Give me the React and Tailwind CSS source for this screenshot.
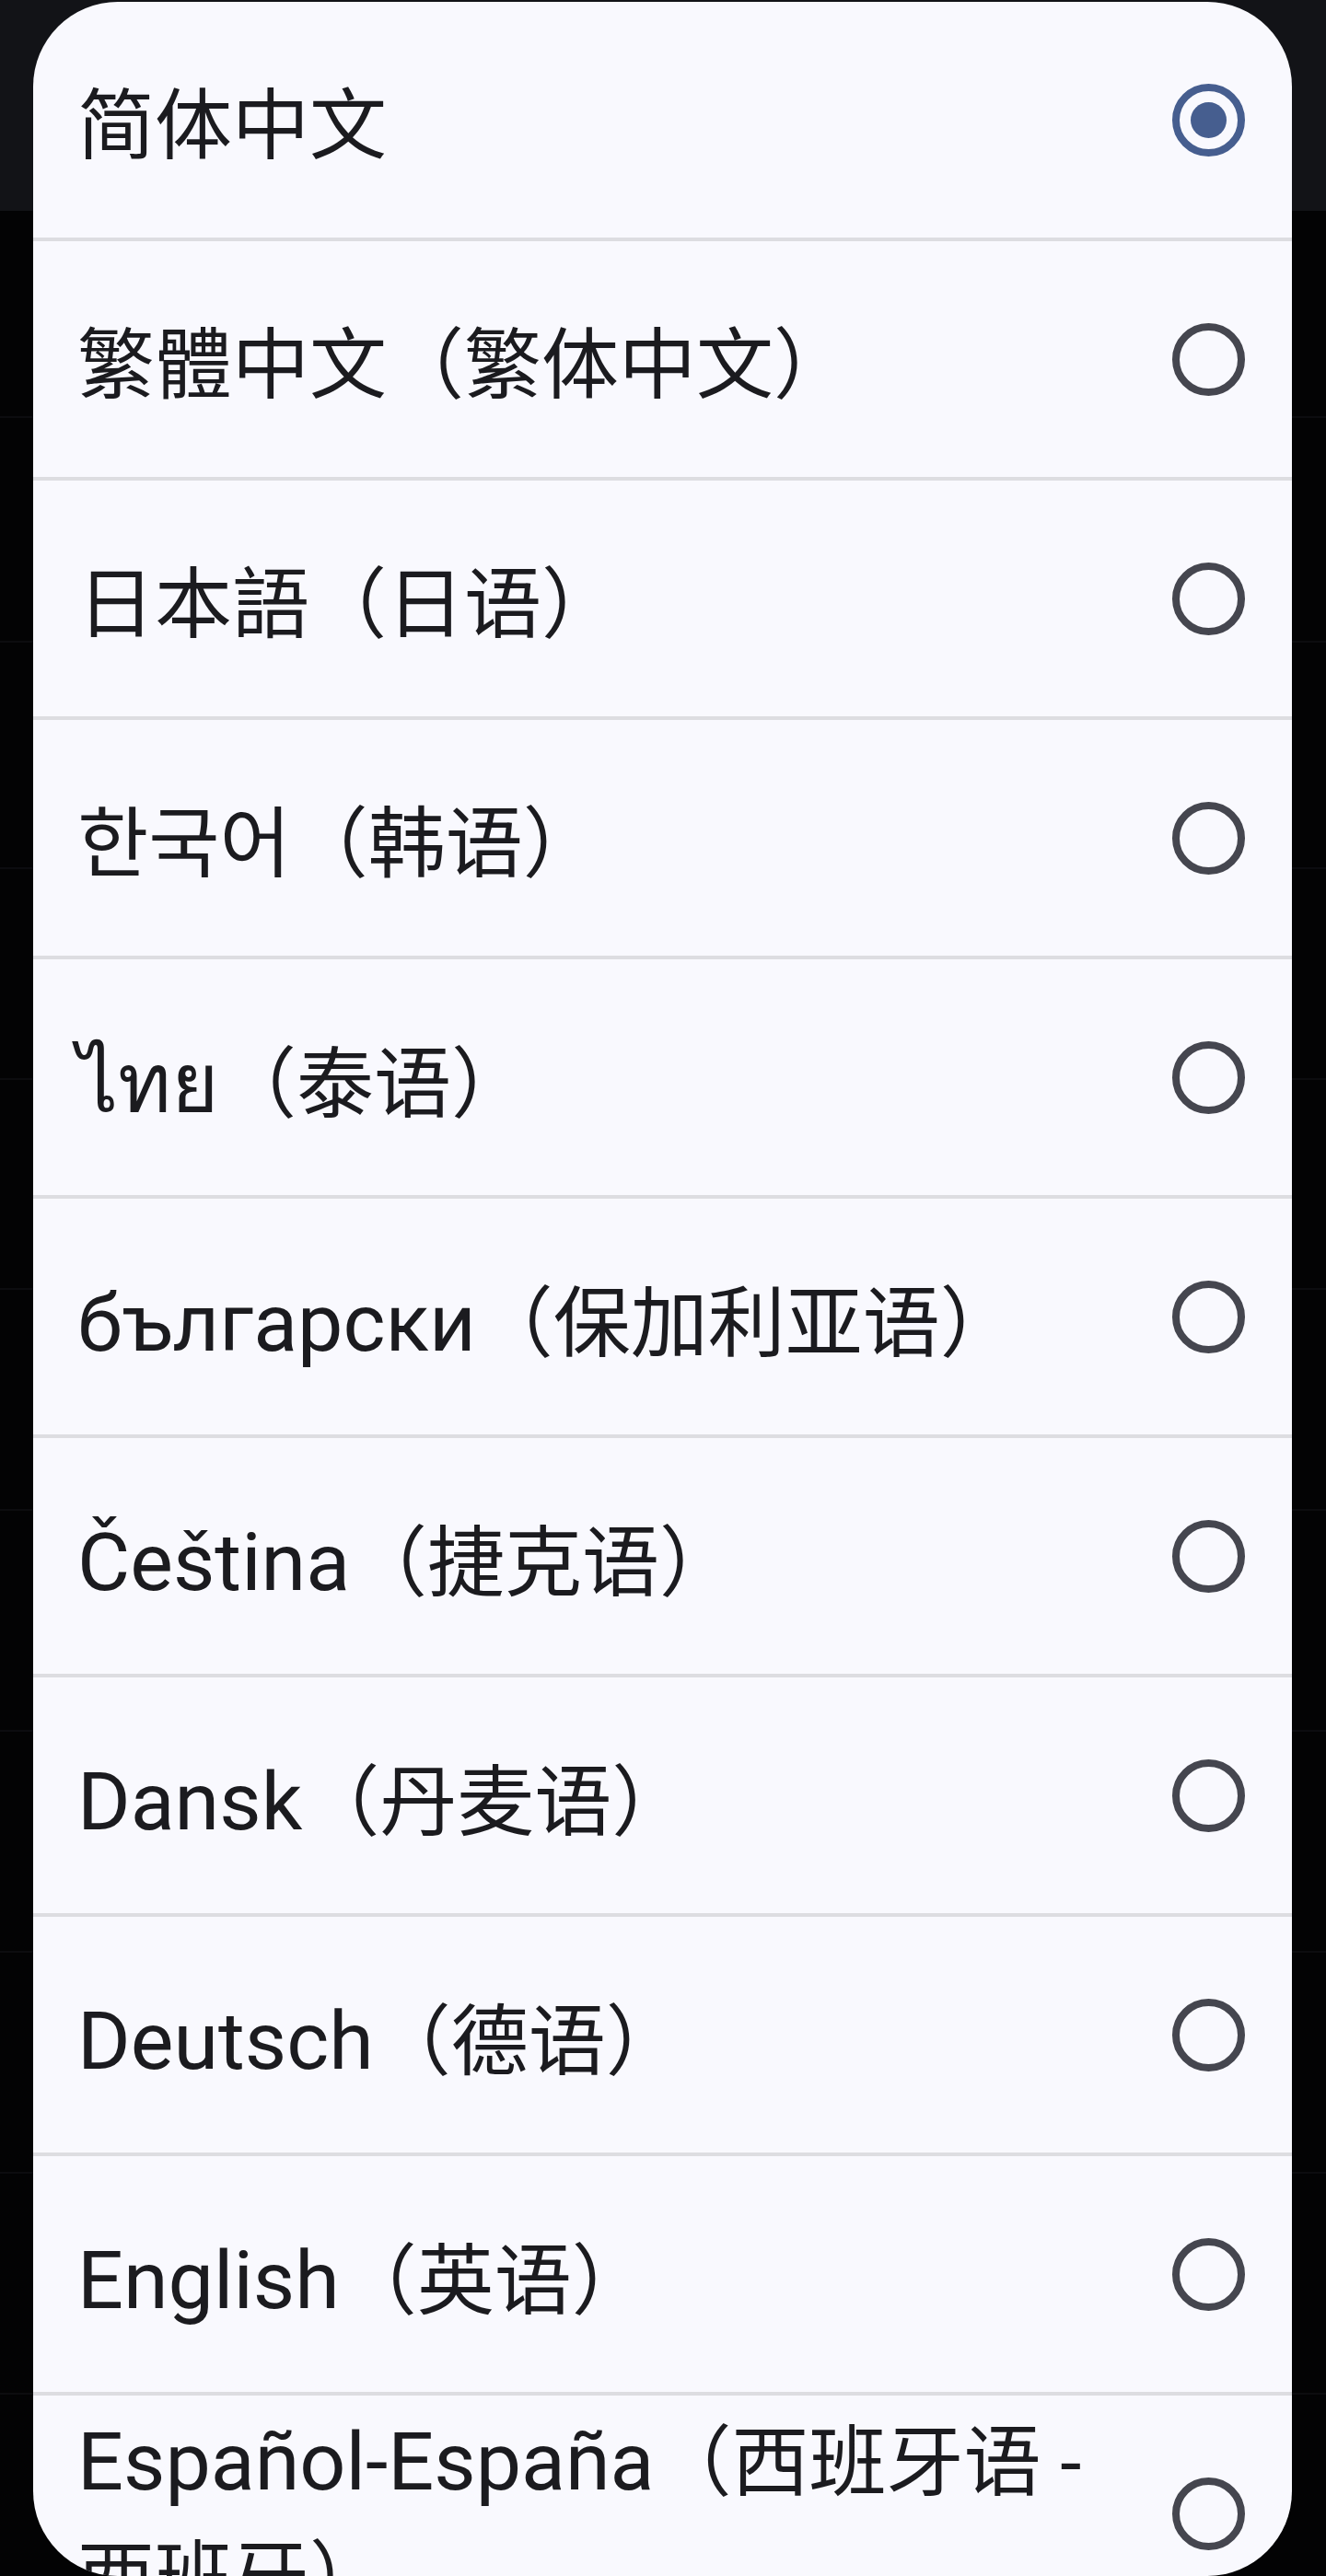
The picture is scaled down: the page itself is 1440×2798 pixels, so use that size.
// name: native language name, zh: chinese gloss in fullwidth parens
// latin marks names set in Roboto, which runs a little larger than the CJK face
const LANGUAGES = [
    { name: "简体中文", selected: true },
    { name: "繁體中文", zh: "（繁体中文）" },
    { name: "日本語", zh: "（日语）" },
    { name: "한국어", zh: "（韩语）" },
    { name: "ไทย", zh: "（泰语）", latin: true },
    { name: "български", zh: "（保加利亚语）", latin: true },
    { name: "Čeština", zh: "（捷克语）", latin: true },
    { name: "Dansk", zh: "（丹麦语）", latin: true },
    { name: "Deutsch", zh: "（德语）", latin: true },
    { name: "English", zh: "（英语）", latin: true },
    { name: "Español-España", zh: "（西班牙语 - 西班牙）", latin: true },
];

// faint rows of the screen behind the dialog
const BACKDROP_ROWS = [225, 244, 246, 229, 228, 240, 240, 240, 240, 240];

function Radio({ checked }) {
    if (checked) {
        return (
            <span className="flex h-[79px] w-[79px] shrink-0 items-center justify-center rounded-full border-[8px] border-[#465e8f]">
                <span className="h-[39px] w-[39px] rounded-full bg-[#465e8f]" />
            </span>
        );
    }
    return (
        <span className="h-[79px] w-[79px] shrink-0 rounded-full border-[8px] border-[#45464f]" />
    );
}

export default function App() {
    return (
        <div className="relative h-[2798px] w-[1440px] overflow-hidden bg-[#030304]">
            {/* backdrop: app bar band + list lines */}
            <div className="flex flex-col">
                <div className="h-[229px] bg-[#121317]" />
                {BACKDROP_ROWS.map((h, i) => (
                    <div
                        key={i}
                        className="border-b-2 border-[#0c0c0f]"
                        style={{ height: h }}
                    />
                ))}
            </div>

            {/* language dialog */}
            <div className="absolute left-[36px] top-[2px] h-[2796px] w-[1367px] overflow-hidden rounded-[92px] bg-[#f9f9fe]">
                {LANGUAGES.map((lang) => (
                    <div
                        key={lang.name}
                        className="flex min-h-[260px] items-center border-b-4 border-[#dddde1] pl-[48px] pr-[51px]"
                    >
                        <span className="mr-[40px] flex-1 translate-y-[7px] font-[Roboto,'Noto_Sans_CJK_SC',sans-serif] text-[84px] leading-[125px] text-[#1b1b1f]">
                            <span className={lang.latin ? "text-[88px]" : ""}>
                                {lang.name}
                            </span>
                            {lang.zh}
                        </span>
                        <Radio checked={lang.selected} />
                    </div>
                ))}
            </div>
        </div>
    );
}
